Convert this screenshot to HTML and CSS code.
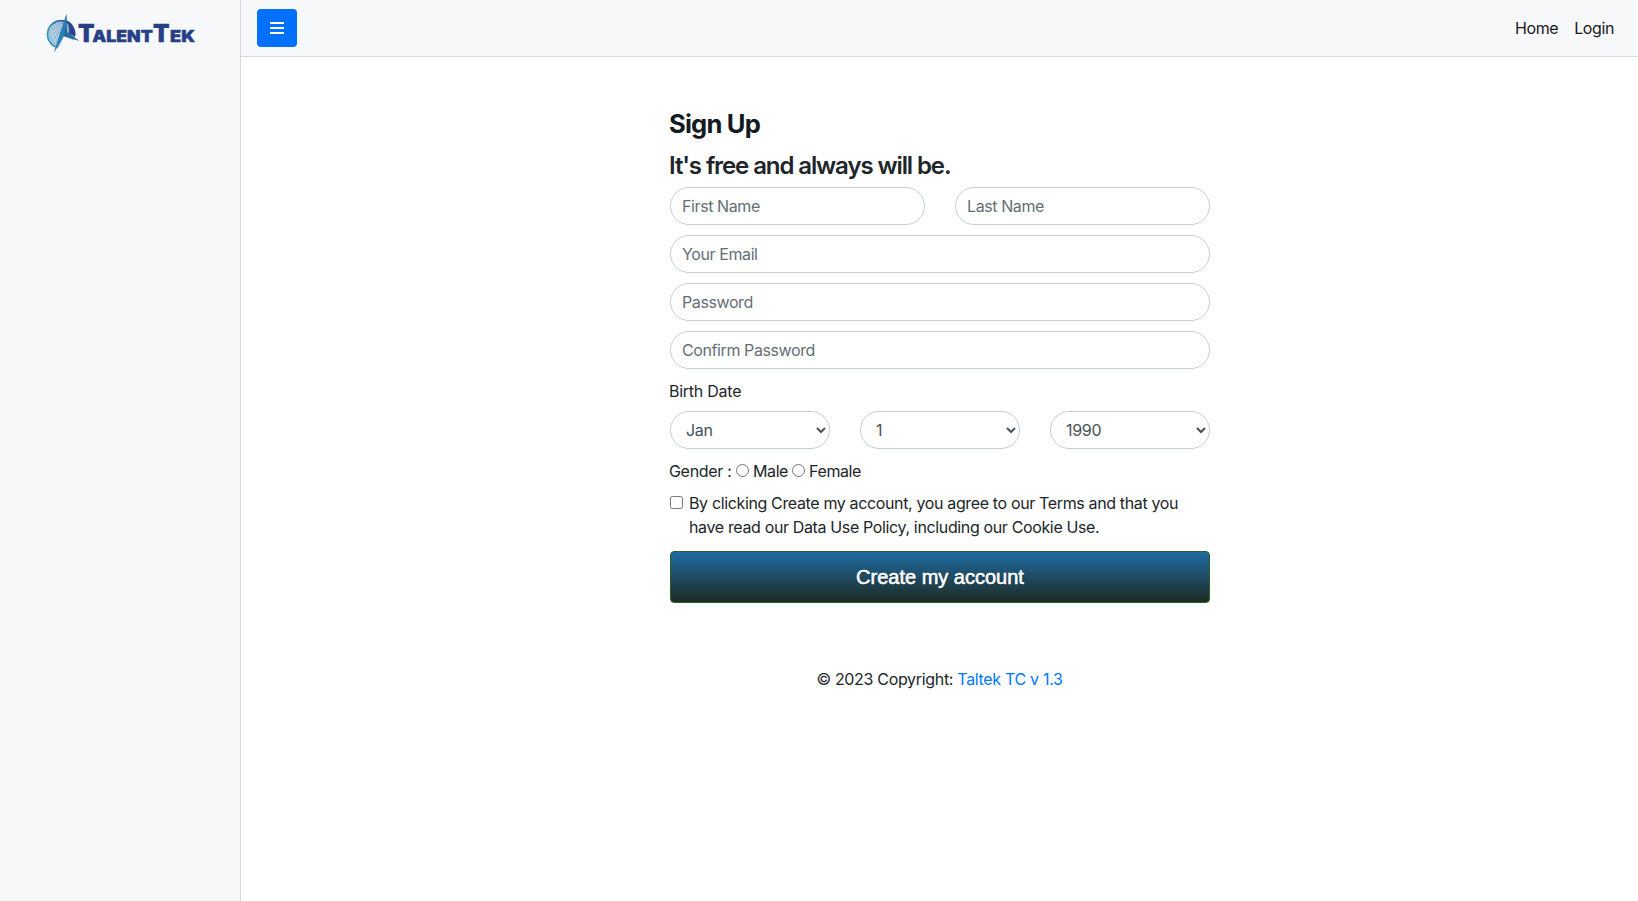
FILE: index.html
```html
<!DOCTYPE html>
<html lang="en">
<head>
<meta charset="utf-8">
<title>TalentTek - Sign Up</title>
<link rel="stylesheet" href="styles.css">
</head>
<body>
<div class="wrapper">
  <aside class="sidebar">
    <svg class="logo" width="156" height="44" viewBox="42 10 156 44" role="img" aria-label="TalentTek">
      <defs>
        <linearGradient id="disc" gradientUnits="userSpaceOnUse" x1="47" y1="38" x2="75" y2="30">
          <stop offset="0" stop-color="#3f9bbf"/>
          <stop offset="0.5" stop-color="#2a6ca6"/>
          <stop offset="1" stop-color="#263a86"/>
        </linearGradient>
      </defs>
      <circle cx="61" cy="34" r="14.2" fill="url(#disc)" fill-opacity="0.5"/>
      <path d="M57 47.4A13.6 13.6 0 1 1 74.6 36" fill="none" stroke="url(#disc)" stroke-width="1.6"/>
      <g fill="none" stroke="#e4f0f6" stroke-width="0.7" stroke-dasharray="1.2 0.8">
        <path d="M50 27L57 46M52 25L59 44M54.5 24L60 40M57 22.5L61.5 36M60 21.8L63 32"/>
        <path d="M52 39Q57 29 69 28M50.5 36Q55 26 68 25M54 42Q59 33 66 31"/>
      </g>
      <path d="M66 20.3C71.5 22 75.2 27 75.2 36.4L69 33.5Q70 26 66 20.3Z" fill="#2a4590"/>
      <path d="M64 36.5L77 41.2L71 50L57.5 50Z" fill="#f7f8fa"/>
      <path d="M66.6 14L67 32L79.5 41L63.3 36L54.2 52.3L60.3 33Z" fill="#246ba3"/>
      <path d="M66.6 14L64.4 34.6L54.2 52.3L60.3 33Z" fill="#2b80af"/>
      <g class="logo-text">
        <text x="78" y="41.5" font-size="24.4" textLength="16.5" lengthAdjust="spacingAndGlyphs">T</text>
        <text x="92.3" y="41.5" font-size="16.4" textLength="60.5" lengthAdjust="spacingAndGlyphs">ALENT</text>
        <text x="153" y="41.5" font-size="24.4" textLength="16.5" lengthAdjust="spacingAndGlyphs">T</text>
        <text x="170" y="41.5" font-size="16.4" textLength="25" lengthAdjust="spacingAndGlyphs">EK</text>
      </g>
    </svg>
  </aside>
  <div class="page">
    <nav class="navbar">
      <button class="menu-toggle" type="button" aria-label="Toggle menu">
        <svg width="14" height="12" viewBox="0 0 14 12"><path d="M0 0h14v2H0zM0 5h14v2H0zM0 10h14v2H0z" fill="#fff"/></svg>
      </button>
      <div class="nav-links">
        <a class="nav-home" href="#">Home</a>
        <a class="nav-login" href="#">Login</a>
      </div>
    </nav>
    <main class="content">
      <form class="signup">
        <h1 class="title">Sign Up</h1>
        <h2 class="subtitle">It's free and always will be.</h2>
        <div class="row names">
          <input class="control" type="text" placeholder="First Name">
          <input class="control" type="text" placeholder="Last Name">
        </div>
        <input class="control" type="text" placeholder="Your Email">
        <input class="control" type="password" placeholder="Password">
        <input class="control" type="password" placeholder="Confirm Password">
        <label class="birth">Birth Date</label>
        <div class="row dates">
          <select class="control"><option>Jan</option></select>
          <select class="control"><option>1</option></select>
          <select class="control"><option>1990</option></select>
        </div>
        <div class="gender">
          <span class="gender-label">Gender :</span>
          <label class="option"><input type="radio" name="gender"><span>Male</span></label>
          <label class="option"><input type="radio" name="gender"><span>Female</span></label>
        </div>
        <label class="terms">
          <input type="checkbox">
          <span>By clicking Create my account, you agree to our Terms and that you<br>have read our Data Use Policy, including our Cookie Use.</span>
        </label>
        <button class="submit" type="button">Create my account</button>
      </form>
      <footer class="footer">© 2023 Copyright: <a href="#">Taltek TC v 1.3</a></footer>
    </main>
  </div>
</div>
</body>
</html>
```
FILE: styles.css
```css
*, *::before, *::after { box-sizing: border-box; }
body {
  margin: 0;
  font: 400 16px/24px Inter, "Liberation Sans", sans-serif;
  letter-spacing: -0.32px;
  color: #212529;
  background: #fff;
}
a { text-decoration: none; color: #0078ff; }
input, select, button { font: inherit; letter-spacing: inherit; margin: 0; }
.wrapper { display: flex; min-height: 100vh; }
.sidebar {
  flex: none;
  width: 241px;
  padding: 10px 0 0 42px;
  background: #f7f8fa;
  border-right: 1px solid #d5dae0;
}
.logo { display: block; }
.logo-text {
  font-family: Inter, sans-serif;
  font-weight: 900;
  letter-spacing: 0;
  fill: #263f87;
  stroke: #263f87;
  stroke-width: 0.4px;
}
.page { flex: 1; min-width: 0; }
.navbar {
  display: flex;
  align-items: center;
  justify-content: space-between;
  height: 57px;
  padding: 0 24px 0 16px;
  background: #f7f8fa;
  border-bottom: 1px solid #d5dae0;
}
.menu-toggle {
  display: flex;
  align-items: center;
  justify-content: center;
  width: 40px;
  height: 38px;
  padding: 0;
  border: 0;
  border-radius: 4px;
  background: #0070ff;
}
.nav-links { display: flex; gap: 16px; }
.nav-links a { color: #17191c; letter-spacing: -0.4px; }
.content { display: flex; flex-direction: column; align-items: center; padding: 49px 0 0 1px; }
.signup { width: 540px; display: flex; flex-direction: column; }
.title { margin: 0 0 10px; font-size: 25.6px; font-weight: 700; line-height: 35px; letter-spacing: -0.8px; text-indent: -1px; color: #151a22; }
.subtitle { margin: 0 0 7px; font-size: 24px; font-weight: 600; line-height: 29px; letter-spacing: -1.1px; text-indent: -1px; }
.row { display: grid; gap: 30px; }
.names { grid-template-columns: 1fr 1fr; margin-bottom: 10px; }
.dates { grid-template-columns: repeat(3, 1fr); margin-bottom: 10px; }
.control {
  width: 100%;
  height: 38px;
  margin-bottom: 10px;
  padding: 6px 12px 6px 11px;
  border: 1px solid #c4ccd4;
  border-radius: 19px;
  background: #fff;
  color: #495057;
}
.row .control { margin-bottom: 0; }
.control::placeholder { color: #656e76; opacity: 1; letter-spacing: -0.4px; }
.birth { margin-bottom: 8px; letter-spacing: -0.25px; text-indent: -1px; }
.gender { display: flex; gap: 4px; margin-bottom: 8px; }
.gender-label { width: 62px; white-space: nowrap; text-indent: -1px; }
.option { display: flex; align-items: flex-start; gap: 4px; letter-spacing: -0.4px; }
.option input { margin: 5px 0 0; }
.terms { display: flex; align-items: flex-start; gap: 6px; margin-bottom: 12px; white-space: nowrap; letter-spacing: -0.36px; }
.terms input { flex: none; margin: 5px 0 0; }
.submit {
  height: 52px;
  border: 1px solid #2d5f22;
  border-radius: 4px;
  background: linear-gradient(#1e6ba3, #1e2b23);
  color: #fff;
  font: 400 20px/30px "Liberation Sans", Arial, sans-serif;
  letter-spacing: 0;
  -webkit-text-stroke: 0.6px #fff;
  text-shadow: 0 1px 1px rgba(0, 0, 0, 0.5);
}
.footer { margin: 64px 1px 0 0; }
```
